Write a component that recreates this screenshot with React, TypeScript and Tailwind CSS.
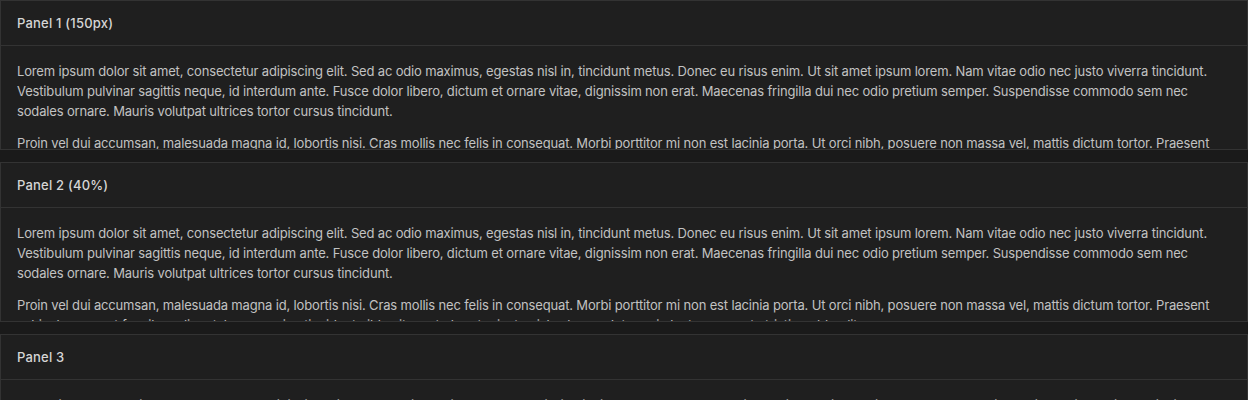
const p1 =
	"Lorem ipsum dolor sit amet, consectetur adipiscing elit. Sed ac odio maximus, egestas nisl in, tincidunt metus. Donec eu risus enim. Ut sit amet ipsum lorem. Nam vitae odio nec justo viverra tincidunt. Vestibulum pulvinar sagittis neque, id interdum ante. Fusce dolor libero, dictum et ornare vitae, dignissim non erat. Maecenas fringilla dui nec odio pretium semper. Suspendisse commodo sem nec sodales ornare. Mauris volutpat ultrices tortor cursus tincidunt.";
const p2 =
	"Proin vel dui accumsan, malesuada magna id, lobortis nisi. Cras mollis nec felis in consequat. Morbi porttitor mi non est lacinia porta. Ut orci nibh, posuere non massa vel, mattis dictum tortor. Praesent vehicula, nunc at faucibus aliquet, lorem sapien tincidunt nibh, sit amet pharetra justo nisl vel nunc. Integer in lectus nec ante tristique blandit.";

const Panel = ({ title, className }: { title: string; className: string }) => {
	return (
		<div className={`flex flex-col shrink-0 overflow-hidden border border-[#333333] bg-[#1f1f1f] ${className}`}>
			<div className="px-4 py-3 border-b border-[#333333] text-[13px] leading-5 font-medium tracking-[0.2px] text-[#d6d6d6]">
				{title}
			</div>
			<div className="flex-1 overflow-hidden px-4 pt-[15px] text-[13px] leading-5 tracking-[-0.16px] text-[#c2c2c2]">
				<p className="mb-3">{p1}</p>
				<p className="mb-3">{p2}</p>
			</div>
		</div>
	);
};

export default function App() {
	return (
		<div
			className="h-screen overflow-hidden bg-[#1a1a1a] flex flex-col gap-3"
			style={{ fontFamily: "Inter, 'Open Sans', sans-serif" }}
		>
			<Panel title="Panel 1 (150px)" className="h-[150px]" />
			<Panel title="Panel 2 (40%)" className="h-[160px]" />
			<Panel title="Panel 3" className="h-[300px]" />
		</div>
	);
}
